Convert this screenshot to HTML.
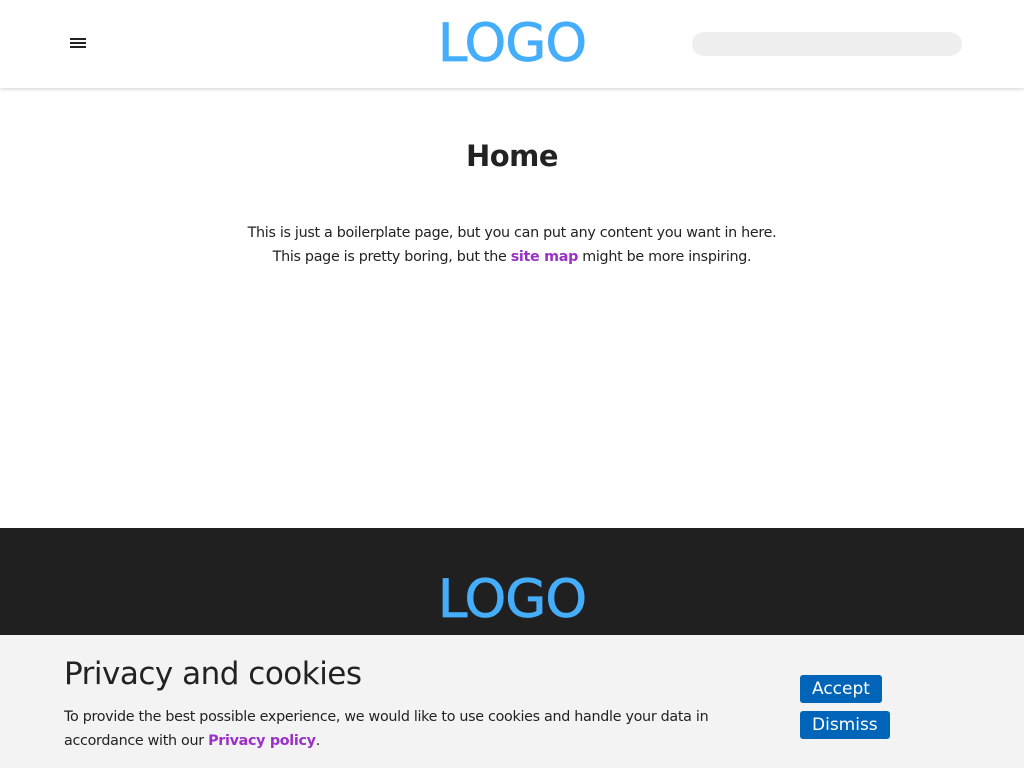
<!DOCTYPE html>
<html><head><meta charset="utf-8"><style>
*{margin:0;padding:0;box-sizing:border-box}
body{width:1024px;height:768px;overflow:hidden;font-family:"DejaVu Sans","Liberation Sans",sans-serif;background:#fff;color:#222;position:relative}
header{height:88px;background:#fff;box-shadow:0 1px 4px rgba(0,0,0,.18);position:relative;z-index:2}
.burger{position:absolute;left:70px;top:38px;width:16px}
.burger i{display:block;height:2px;background:#222;margin-bottom:2px}
.logo{position:absolute;left:0;right:0;text-align:center;color:#45aefc;font-size:53px;letter-spacing:-1px;font-family:"DejaVu Sans",sans-serif;-webkit-text-stroke:0.8px #45aefc}
.search{position:absolute;left:692px;top:32px;width:270px;height:24px;border-radius:12px;background:#eee}
h1{font-size:29px;font-weight:bold;text-align:center;position:absolute;top:139px;width:100%;letter-spacing:-0.5px}
.p{position:absolute;top:221px;width:100%;text-align:center;font-size:14.3px;line-height:24px;letter-spacing:-0.3px}
a{color:#9b30c9;font-weight:bold;text-decoration:none}
footer{position:absolute;top:528px;left:0;width:1024px;height:240px;background:#202020}
.cookie{position:absolute;top:635px;left:0;width:1024px;height:133px;background:#f3f3f3}
.cookie h2{position:absolute;left:64px;top:21px;font-size:31px;font-weight:normal;letter-spacing:-0.5px;color:#222}
.cookie .t{position:absolute;left:64px;top:70px;font-size:14.3px;line-height:24px;width:680px;letter-spacing:-0.3px}
.btn{position:absolute;left:800px;background:#0065b8;color:#fff;font-size:17px;height:28px;line-height:28px;padding:0 12px;border-radius:3px}
</style></head><body>
<header>
<div class="burger"><i></i><i></i><i></i></div>
<div class="logo" style="top:13px">LOGO</div>
<div class="search"></div>
</header>
<h1>Home</h1>
<div class="p">This is just a boilerplate page, but you can put any content you want in here.<br>This page is pretty boring, but the <a>site map</a> might be more inspiring.</div>
<footer><div class="logo" style="top:41px">LOGO</div></footer>
<div class="cookie">
<h2>Privacy and cookies</h2>
<div class="t">To provide the best possible experience, we would like to use cookies and handle your data in accordance with our <a>Privacy policy</a>.</div>
<div class="btn" style="top:40px">Accept</div>
<div class="btn" style="top:76px">Dismiss</div>
</div>
</body></html>
